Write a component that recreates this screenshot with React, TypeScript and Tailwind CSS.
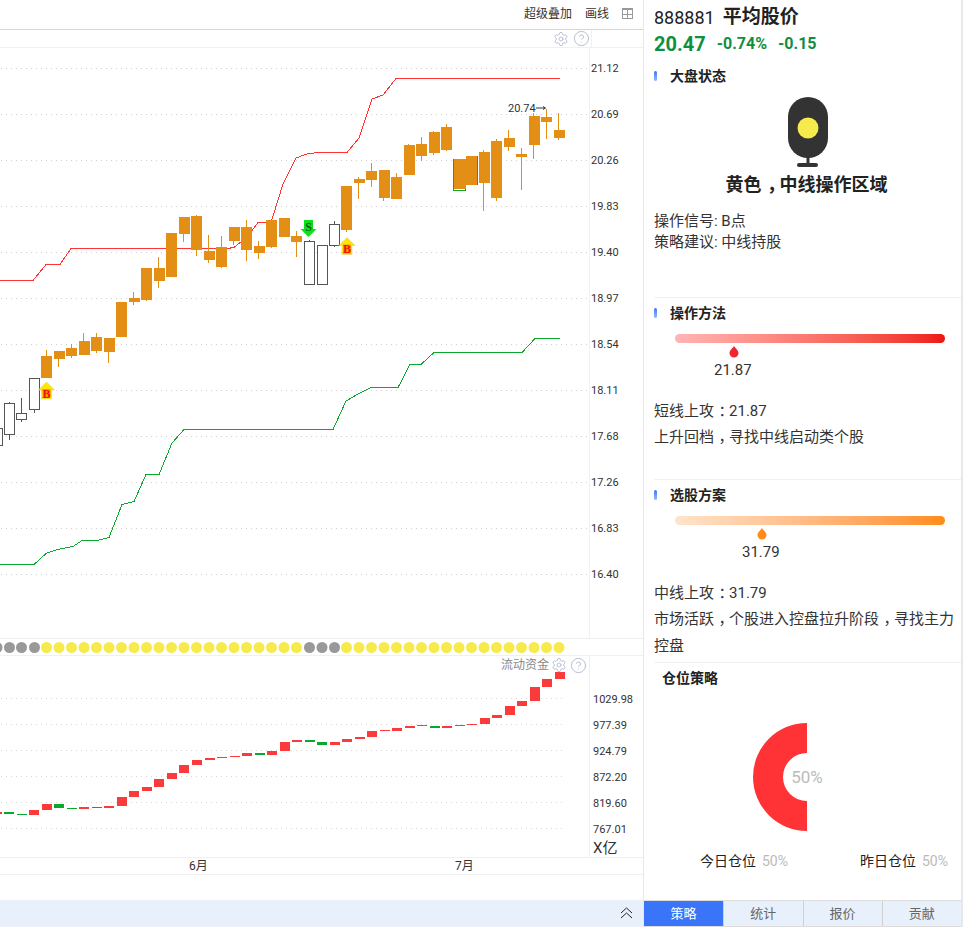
import { Settings, CircleHelp } from 'lucide-react'

type Candle = [number, number, number, number, number, 'o' | 'w' | 'g']

// center x, wick top, body top, body bottom, wick bottom, kind
const candles: Candle[] = [
  [-3, 425, 428, 445, 448, 'w'],
  [9.5, 402, 403, 434, 440, 'w'],
  [21.5, 398, 413, 419, 422, 'w'],
  [34.5, 378, 378, 409, 413, 'w'],
  [46.5, 350, 356, 378, 378, 'o'],
  [59, 351, 351, 359, 367, 'o'],
  [71.5, 344, 348, 356, 358, 'o'],
  [84, 333, 341, 355, 355, 'o'],
  [96.5, 333, 337, 351, 353, 'o'],
  [109, 338, 338, 352, 363, 'o'],
  [121.5, 302, 302, 337, 337, 'o'],
  [134, 292, 298, 302, 305, 'o'],
  [146.5, 268, 268, 300, 301, 'o'],
  [159, 257, 268, 281, 288, 'o'],
  [171.5, 233, 233, 277, 277, 'o'],
  [184, 217, 217, 234, 242, 'o'],
  [196.5, 215, 216, 250, 256, 'o'],
  [209, 235, 251, 260, 263, 'o'],
  [221.5, 236, 247, 267, 268, 'o'],
  [234, 227, 227, 241, 245, 'o'],
  [246.5, 220, 227, 250, 261, 'o'],
  [259, 241, 246, 253, 259, 'o'],
  [271.5, 220, 220, 247, 248, 'o'],
  [284, 218, 218, 237, 237, 'o'],
  [296.5, 231, 236, 242, 257, 'o'],
  [309.5, 240, 241, 284, 284, 'w'],
  [322, 245, 245, 284, 284, 'w'],
  [334.5, 221, 224, 245, 247, 'w'],
  [346.5, 186, 186, 230, 232, 'o'],
  [359, 177, 179, 183, 199, 'o'],
  [371.5, 163, 171, 180, 187, 'o'],
  [384, 170, 170, 198, 201, 'o'],
  [396.5, 173, 177, 199, 199, 'o'],
  [409, 144, 145, 175, 175, 'o'],
  [421.5, 137, 144, 156, 161, 'o'],
  [434, 131, 132, 153, 155, 'o'],
  [446.5, 124, 127, 150, 151, 'o'],
  [459, 159, 159, 191, 191, 'g'],
  [471.5, 156, 156, 185, 185, 'o'],
  [484, 150, 152, 183, 211, 'o'],
  [496.5, 139, 141, 198, 201, 'o'],
  [509, 130, 138, 147, 151, 'o'],
  [521.5, 148, 154, 157, 190, 'o'],
  [534, 113, 116, 145, 159, 'o'],
  [546.5, 109, 117, 122, 139, 'o'],
  [559, 113, 130, 138, 140, 'o'],
]

const redLine =
  '0,280.5 33,280.5 46,264.5 60,264.5 71,248.5 227,248.5 234,247.5 247,237 258,222.5 271,222.5 283,184 296,158 308,153.5 320,152.5 347,152.5 359,138 372,99 383,95 396,78.5 560,78.5'
const greenLine =
  '0,564.5 34,564.5 46,553.5 57,549.5 73,546.5 82,540.5 97,540.5 109,537.5 122,504.5 134,501.5 146,474.5 159,474.5 172,443 184,429.5 333,429.5 346,401 358,394 371,387.5 398,387.5 410,364.5 421,364.5 434,352.5 522,352.5 535,338.5 560,338.5'

const priceLabels = ['21.12', '20.69', '20.26', '19.83', '19.40', '18.97', '18.54', '18.11', '17.68', '17.26', '16.83', '16.40']
const flowLabels = ['1029.98', '977.39', '924.79', '872.20', '819.60', '767.01']

const grayDots = [-3, 9.5, 21.5, 34.5, 309.5, 322, 334.5]
const yellowDots = candles.map((c) => c[0]).filter((x) => !grayDots.includes(x))

// left x, top, bottom, up?
const flowBars: [number, number, number, boolean][] = [
  [-8, 812, 814, true], [4, 812, 814, false], [17, 814, 815, false], [29, 810, 815, true],
  [42, 804, 810, true], [54, 804, 808, false], [67, 808, 809, false], [79, 807, 809, true],
  [92, 807, 808, false], [104, 806, 808, true], [117, 797, 806, true], [129, 791, 797, true],
  [142, 787, 791, true], [154, 779, 787, true], [167, 773, 779, true], [179, 765, 773, true],
  [192, 760, 765, true], [205, 758, 760, true], [217, 757, 758, true], [230, 756, 757, true],
  [242, 753, 756, true], [255, 753, 755, false], [267, 751, 755, true], [280, 742, 751, true],
  [292, 740, 742, true], [305, 740, 742, false], [317, 742, 745, false], [330, 742, 745, true],
  [342, 739, 742, true], [355, 737, 739, true], [367, 731, 737, true], [380, 730, 731, true],
  [392, 728, 731, true], [405, 726, 728, true], [417, 725, 726, true], [430, 726, 728, false],
  [442, 726, 728, true], [455, 725, 726, true], [467, 724, 725, true], [480, 718, 724, true],
  [492, 715, 718, true], [505, 706, 715, true], [517, 701, 706, true], [530, 687, 701, true],
  [542, 679, 687, true], [555, 672, 679, true],
]

const fontFamily = 'font-["Roboto","Noto_Sans_CJK_SC",sans-serif]'

function SectionTitle({ children }: { children: string }) {
  return (
    <div className="flex items-center gap-[13px] h-[20px]">
      <span className="w-[3px] h-[10px] rounded-sm bg-gradient-to-b from-[#3a74f8] to-[#9db9fb]" />
      <span className="text-[14px] font-bold text-[#222]">{children}</span>
    </div>
  )
}

// full-width punctuation sits in the middle of its cell in the reference font
function Punct({ children }: { children: string }) {
  return <span className="ml-[0.3em] tracking-[-0.3em]">{children}</span>
}

function Pin({ color }: { color: string }) {
  return (
    <svg width="10" height="12" viewBox="0 0 10 12">
      <path d="M5 0 C6 2 9.5 4 9.5 7 A4.5 4.5 0 0 1 0.5 7 C0.5 4 4 2 5 0 Z" fill={color} />
    </svg>
  )
}

function BuyMark({ x, y }: { x: number; y: number }) {
  return (
    <g>
      <path d={`M${x} ${y} L${x + 8} ${y + 8} L${x + 5} ${y + 8} L${x + 5} ${y + 17} L${x - 5} ${y + 17} L${x - 5} ${y + 8} L${x - 8} ${y + 8} Z`} fill="#ffe600" stroke="#d9cf6a" strokeWidth="0.5" />
      <rect x={x - 4} y={y + 7} width="8" height="9" fill="#ff9a00" />
      <text x={x} y={y + 15.5} textAnchor="middle" fontSize="12" fontWeight="700" fill="#f01000" fontFamily="Liberation Serif, serif">B</text>
    </g>
  )
}

function PriceChart() {
  return (
    <svg width="589" height="590" viewBox="0 48 589 590" className="block shrink-0" shapeRendering="crispEdges">
      {priceLabels.map((_, i) => (
        <line key={i} x1="1" x2="588" y1={68.5 + i * 46} y2={68.5 + i * 46} stroke="#d0d0d0" strokeDasharray="1 4" />
      ))}
      <polyline points={redLine} fill="none" stroke="#ff3333" />
      <polyline points={greenLine} fill="none" stroke="#0aa82e" />
      {candles.map(([c, wt, bt, bb, wb, kind]) => {
        const left = Math.round(c - 5.5)
        const wx = Math.floor(c - 0.5)
        if (kind === 'w') {
          return (
            <g key={c}>
              <rect x={wx} y={wt} width="1" height={wb - wt} fill="#555" />
              <rect x={left + 0.5} y={bt + 0.5} width="10" height={bb - bt} fill="#fff" stroke="#555" />
            </g>
          )
        }
        if (kind === 'g') {
          return (
            <g key={c}>
              <rect x={left - 0.5} y={bt + 0.5} width="12" height={bb - bt - 1} fill="#fff" stroke="#0aa82e" />
              <rect x={left} y={bt} width="12" height={bb - bt - 2} fill="#e38e15" />
            </g>
          )
        }
        return (
          <g key={c}>
            <rect x={wx} y={wt} width="1" height={wb - wt} fill="#e38e15" />
            <rect x={left} y={bt} width="11" height={bb - bt} fill="#e38e15" />
          </g>
        )
      })}
      <rect x="477" y="156" width="1" height="29" fill="#0aa82e" />
      {/* buy and sell markers */}
      <g shapeRendering="auto">
        <BuyMark x={46.5} y={382} />
        <BuyMark x={347} y={237.5} />
        <path d="M304 220 L313 220 L313 229 L316.500 229 L308.500 237 L300.500 229 L304 229 Z" fill="#0ce01a" />
        <text x="308.500" y="231" textAnchor="middle" fontSize="12" fontWeight="700" fill="#0b5f24" fontFamily="Liberation Serif, serif">S</text>
        <text x="508" y="112" fontSize="11" fill="#333" fontFamily="Roboto, sans-serif">20.74</text>
        <path d="M536 108 H545 M543 106.500 L545.500 108 L543 109.500" fill="none" stroke="#333" strokeWidth="1" />
      </g>
    </svg>
  )
}

function FlowChart() {
  return (
    <svg width="589" height="201" viewBox="0 656 589 201" className="block shrink-0" shapeRendering="crispEdges">
      {flowLabels.map((_, i) => (
        <line key={i} x1="1" x2="565" y1={698.5 + i * 26} y2={698.5 + i * 26} stroke="#d6d6d6" strokeDasharray="1 4" />
      ))}
      {flowBars.map(([x, top, bottom, up]) => (
        <rect key={x} x={x} y={top} width="10" height={bottom - top} fill={up ? '#fb3b3b' : '#08a82e'} />
      ))}
    </svg>
  )
}

export default function App() {
  return (
    <div className={`flex w-[963px] h-[930px] overflow-hidden bg-white text-[#333] ${fontFamily}`}>
      {/* Chart column */}
      <div className="w-[643px] shrink-0 flex flex-col">
        <div className="h-[30px] flex items-center justify-end border-b border-[#d6d6d6] pr-[10px] pb-[2px] text-[12px] text-[#333]">
          <span>超级叠加</span>
          <span className="ml-[13px]">画线</span>
          <svg width="11" height="11" viewBox="0 0 11 11" className="ml-[13px]" shapeRendering="crispEdges">
            <rect x="0.5" y="0.5" width="10" height="10" fill="none" stroke="#999" />
            <rect x="0" y="0" width="11" height="2" fill="#999" />
            <rect x="5" y="2" width="1" height="9" fill="#999" />
            <rect x="0" y="6" width="11" height="1" fill="#999" />
          </svg>
        </div>
        <div className="h-[18px] flex border-b border-[#f0f0f0]">
          <div className="w-[592px] flex items-center justify-end gap-[4px] pr-[1px] border-r border-[#f0f0f0]">
            <Settings size={16} strokeWidth={1.4} className="text-[#b4bccf]" />
            <CircleHelp size={17} strokeWidth={1.4} className="text-[#b4bccf]" />
          </div>
        </div>
        <div className="h-[590px] flex">
          <PriceChart />
          <div className="flex-1 border-l border-[#f0f0f0] pt-[13px] pl-[1px] flex flex-col gap-[30px] text-[11px] leading-[16px]">
            {priceLabels.map((p) => (
              <span key={p}>{p}</span>
            ))}
          </div>
        </div>
        <div className="h-[18px] border-y border-[#f0f0f0] flex">
          <svg width="589" height="16" viewBox="0 639 589 16" className="block shrink-0">
            {grayDots.map((x) => (
              <circle key={x} cx={x} cy="647.5" r="5.5" fill="#999" />
            ))}
            {yellowDots.map((x) => (
              <circle key={x} cx={x} cy="647.5" r="5.5" fill="#f7ea4d" />
            ))}
          </svg>
        </div>
        <div className="relative h-[201px] flex">
          <FlowChart />
          <div className="flex-1 border-l border-[#f0f0f0] pt-[36px] pl-[3px] flex flex-col gap-[10px] text-[11px] leading-[16px]">
            {flowLabels.map((p) => (
              <span key={p}>{p}</span>
            ))}
            <span className="text-[15px] leading-[20px] -mt-[10px]">X亿</span>
          </div>
          <div className="absolute left-[501px] top-0 flex items-center h-[18px] text-[12px] text-[#888]">
            <span>流动资金</span>
            <Settings size={16} strokeWidth={1.4} className="ml-[2px] text-[#b4bccf]" />
            <CircleHelp size={17} strokeWidth={1.4} className="ml-[3px] text-[#b4bccf]" />
          </div>
        </div>
        <div className="relative h-[18px] border-y border-[#f0f0f0] text-[12px] leading-[16px]">
          <span className="absolute left-[189px] top-[0px]">6月</span>
          <span className="absolute left-[455px] top-[0px]">7月</span>
        </div>
        <div className="h-[25px]" />
        <div className="h-[27px] bg-[#e8f0fc] border-b border-[#eef2f8] flex items-center justify-end pr-[10px]">
          <svg width="13" height="12" viewBox="0 0 13 12" fill="none" stroke="#222" strokeWidth="1">
            <path d="M1 6 L6.500 1 L12 6" />
            <path d="M1 11 L6.500 6 L12 11" />
          </svg>
        </div>
      </div>

      {/* Strategy panel */}
      <div className="w-[320px] shrink-0 h-[927px] border-l border-r-2 border-[#e8e8e8] flex flex-col">
        <div className="pl-[10px] flex-1 flex flex-col">
          <div className="h-[34px] flex items-center">
            <span className="text-[18px] text-[#222]">888881</span>
            <span className="ml-[8px] text-[19px] font-bold text-[#222]">平均股价</span>
          </div>
          <div className="h-[20px] flex items-center font-bold text-[#0f9040]">
            <span className="text-[20px]">20.47</span>
            <span className="ml-[11px] text-[16px]">-0.74%</span>
            <span className="ml-[11px] text-[16px]">-0.15</span>
          </div>
          <div className="mt-[12px]">
            <SectionTitle>大盘状态</SectionTitle>
          </div>
          <div className="h-[72px] mt-[11px] flex justify-center">
            <svg width="42" height="70" viewBox="0 0 42 70">
              <path d="M1 20 A20 20 0 0 1 41 20 V41 A20 20 0 0 1 1 41 Z" fill="#333" />
              <rect x="19.500" y="60" width="3" height="7" fill="#333" />
              <rect x="10" y="66" width="21" height="4" rx="2" fill="#333" />
              <circle cx="21" cy="31" r="10.500" fill="#f7ea4d" />
            </svg>
          </div>
          <div className="h-[30px] flex items-center justify-center text-[18px] font-bold text-[#222] pr-[2px]">
            <span>黄色<Punct>，</Punct>中线操作区域</span>
          </div>
          <div className="mt-[12px] text-[15px] leading-[21px]">
            <div>操作信号: B点</div>
            <div>策略建议: 中线持股</div>
          </div>
          <div className="mt-[44px] border-t border-[#f0f0f0] pt-[5px]">
            <SectionTitle>操作方法</SectionTitle>
            <div className="relative h-[75px]">
              <div className="absolute left-[21px] top-[11px] w-[270px] h-[9px] rounded-full bg-gradient-to-r from-[#ffb5b5] to-[#ee1111]" />
              <div className="absolute left-[75px] top-[23px]">
                <Pin color="#f02530" />
              </div>
              <div className="absolute left-[60px] top-[37px] text-[15px] leading-[20px]">21.87</div>
            </div>
            <div className="text-[15px] leading-[26px]">短线上攻<Punct>：</Punct>21.87</div>
            <div className="text-[15px] leading-[26px]">上升回档<Punct>，</Punct>寻找中线启动类个股</div>
          </div>
          <div className="mt-[29px] border-t border-[#f0f0f0] pt-[5px]">
            <SectionTitle>选股方案</SectionTitle>
            <div className="relative h-[75px]">
              <div className="absolute left-[21px] top-[11px] w-[270px] h-[9px] rounded-full bg-gradient-to-r from-[#ffe4cb] to-[#ff8c0f]" />
              <div className="absolute left-[103px] top-[23px]">
                <Pin color="#ff8c1a" />
              </div>
              <div className="absolute left-[88px] top-[37px] text-[15px] leading-[20px]">31.79</div>
            </div>
            <div className="text-[15px] leading-[26px]">中线上攻<Punct>：</Punct>31.79</div>
            <div className="text-[15px] leading-[27px]">
              <div>市场活跃<Punct>，</Punct>个股进入控盘拉升阶段<Punct>，</Punct>寻找主力</div>
              <div>控盘</div>
            </div>
          </div>
          <div className="mt-[2px] border-t border-[#f0f0f0] pt-[5px]">
            <div className="pl-[8px] h-[20px] flex items-center text-[14px] font-bold text-[#222]">仓位策略</div>
            <div className="mt-[34px] flex justify-center pr-[1px]">
              <svg width="110" height="110" viewBox="0 0 110 110">
                <path d="M55 1 A54 54 0 0 0 55 109 L55 79 A24 24 0 0 1 55 31 Z" fill="#ff3336" />
                <text x="55" y="61" textAnchor="middle" fontSize="17" fill="#bbb" fontFamily="Roboto, sans-serif">50%</text>
              </svg>
            </div>
            <div className="mt-[19px] flex text-[14px] leading-[20px] text-[#222]">
              <span className="ml-[46px]">今日仓位</span>
              <span className="ml-[6px] text-[#bbb]">50%</span>
              <span className="ml-[72px]">昨日仓位</span>
              <span className="ml-[6px] text-[#bbb]">50%</span>
            </div>
          </div>
        </div>
        <div className="h-[27px] grid grid-cols-4 border-t border-b border-[#dcdcdc] text-[13px] text-[#666]">
          <div className="bg-[#3a74f8] text-white flex items-center justify-center">策略</div>
          <div className="bg-[#e8f0fc] border-l border-[#d0d0d0] flex items-center justify-center">统计</div>
          <div className="bg-[#e8f0fc] border-l border-[#d0d0d0] flex items-center justify-center">报价</div>
          <div className="bg-[#e8f0fc] border-l border-[#d0d0d0] flex items-center justify-center">贡献</div>
        </div>
      </div>
    </div>
  )
}
